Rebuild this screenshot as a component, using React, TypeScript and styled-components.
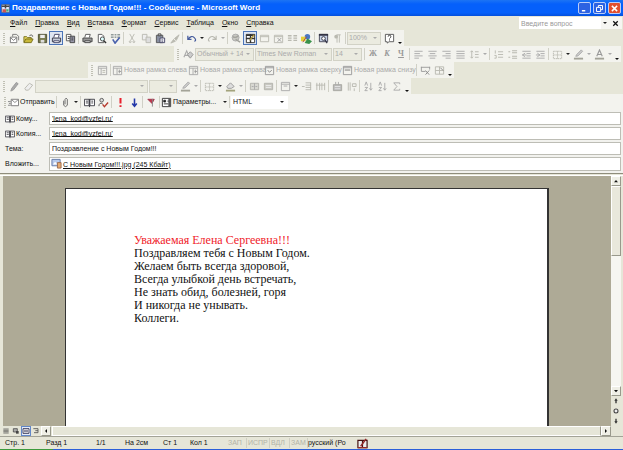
import React from "react";
import styled, { createGlobalStyle, css } from "styled-components";

const Global = createGlobalStyle`
  * { box-sizing: border-box; }
  html, body { margin: 0; padding: 0; }
  body { background: #e6e6d8; font-family: "Liberation Sans", Arial, sans-serif; font-size: 7px; line-height: 10px; color: #111; }
  button, input, select { font: inherit; color: inherit; margin: 0; padding: 0; border: 0; border-radius: 0; background: none; }
`;

const G = "#b9b9b0";
const K = "#3c3c44";

const icons: Record<string, React.ReactNode> = {
  app: <><rect x="1" y="1" width="10" height="10" fill="#dfe8ff" stroke="#666" /><path d="M1 3h10M6 1v5" stroke="#444" strokeWidth="2" /><path d="M2 7h5v4H2z" fill="#c55" /><path d="M7 7h3v3H7z" fill="#4a7" /></>,
  newMail: <><path d="M1.500 4.500h7v6h-7z" fill="#fff" stroke="#777" /><path d="M1.500 5l3.500 3 3.500-3M4 4V1.500h4l2.500 2V8" fill="none" stroke="#777" /></>,
  open: <><path d="M1 10V4h3l1 1h4v2" fill="#e8d860" stroke="#77701c" /><path d="M1 10.500l2-4h8l-2 4z" fill="#c9b93a" stroke="#77701c" /><path d="M7 3q2-2 3.500 0l0 1" fill="none" stroke="#555" /></>,
  save: <><path d="M1.500 1.500h9v9h-9z" fill="#77794c" stroke="#4c4e32" /><path d="M3.500 2h5v3.500h-5z" fill="#eee" /><path d="M4 7.500h4v3H4z" fill="#ddd" /></>,
  printOn: <><path d="M3 5l1-3.500h5L8 5" fill="#fff" stroke="#446" /><path d="M1.500 5.500h9v4h-9z" fill="#c5cbd8" stroke="#334" /><path d="M3 8.500h6v2H3z" fill="#fff" stroke="#446" /></>,
  find: <><path d="M1.500 1.500h5v7h-5z" fill="#fff" stroke="#555" /><path d="M5.500 3.500h5v7h-5z" fill="#99a" stroke="#444" /><path d="M3 4h2M3 6h2M7 5.500h2M7 7.500h2" stroke="#333" /></>,
  print: <><path d="M3 5l1-3.500h5L8 5" fill="#fff" stroke="#555" /><path d="M1 5.500h10v4H1z" fill="#999" stroke="#444" /><path d="M3 8.500h6v2H3z" fill="#ddd" stroke="#444" /></>,
  preview: <><path d="M2.500 1.500h4l2 2v7h-6z" fill="#fff" stroke="#555" /><circle cx="7" cy="6.500" r="2.200" fill="#dff" stroke="#444" /><path d="M8.500 8.500l2.500 2.500" stroke="#333" strokeWidth="1.500" /></>,
  spell: <><path d="M1 4.500h3M5 4.500h2M8 4.500h3M1 2h3M5 2h2M8 2h3" stroke="#566" /><path d="M3 7l2.500 4L10.500 5" fill="none" stroke="#4a62ad" strokeWidth="1.800" /></>,
  cut: <path d="M3 1l4 7M8 1L4 8M2.500 9.500a1 1 0 1 0 2 0 1 1 0 1 0-2 0M6.500 9.500a1 1 0 1 0 2 0 1 1 0 1 0-2 0" fill="none" stroke={G} />,
  copy: <><path d="M1.500 1.500h5v6h-5z" fill="#eee" stroke={G} /><path d="M5.500 4.500h5v6h-5z" fill="#ddd" stroke={G} /></>,
  paste: <><path d="M1.500 2.500h7v8h-7z" fill="#888fa0" stroke="#555" /><path d="M3.500 1h3v2h-3z" fill="#ddd" stroke="#444" /><path d="M5.500 5.500h5v5h-5z" fill="#fff" stroke="#446" /><path d="M7 7.500h2M7 9h2" stroke="#557" /></>,
  brush: <path d="M2 11l3-4 2 2zM6 6l2 2 3-6z" fill={G} stroke={G} />,
  undo: <path d="M2 3v4h4M2.500 6.500Q6 2 9 5t0 4" fill="none" stroke="#445a9c" strokeWidth="1.300" />,
  redo: <path d="M10 3v4H6M9.500 6.500Q6 2 3 5t0 4" fill="none" stroke={G} strokeWidth="1.200" />,
  globe: <><circle cx="5" cy="5" r="3.800" fill="#c8c8c2" stroke="#aaa" /><path d="M2 4q3 2 6-1M5 7l5 3" stroke="#a2a29c" fill="none" strokeWidth="1.500" /></>,
  tables: <><path d="M1.500 1.500h9v9h-9z" fill="#fff" stroke="#333" /><path d="M1 2.500h10M1 6h10M6 1v10" stroke="#333" strokeWidth="1.500" /><path d="M5 8l5-6" stroke="#b59b3b" strokeWidth="1.500" /></>,
  table: <path d="M1.500 2.500h9v7h-9zM1.500 4h9" fill="none" stroke={G} />,
  excel: <><path d="M1.500 2.500h9v8h-9zM1.500 4h9" fill="none" stroke={G} /><path d="M5 5.500l4 4M9 5.500l-4 4" stroke="#999" /></>,
  columns: <path d="M1 3h4M7 3h4M1 5.500h4M7 5.500h4M1 8h4M7 8h4" stroke={G} strokeWidth="1.400" />,
  draw: <><circle cx="7" cy="4" r="3" fill="#4a78c5" /><path d="M0 4h5v5H0z" fill="#e5cf3a" /><path d="M4 11l3-5 5 3-3 3z" fill="#39914b" /><path d="M2 10l4-6" stroke="#a44" /></>,
  map: <><path d="M1.500 1.500h9v8h-9z" fill="#c5d0e6" stroke="#445" /><path d="M1 2h10" stroke="#334" strokeWidth="2" /><circle cx="6" cy="6" r="2" fill="#fff" stroke="#334" /><path d="M7.500 7.500L10 11" stroke="#334" strokeWidth="1.300" /></>,
  pilcrow: <><path d="M5.500 2v8.500M8 2v8.500M9.500 2H5" stroke={G} fill="none" /><circle cx="4.500" cy="4" r="2" fill={G} /></>,
  help: <><path d="M1.500 1.500h9v8h-5l-2 1.500V9.500h-2z" fill="#fff" stroke="#555" /><path d="M4.500 4q0-1.500 1.500-1.500T7.500 4Q7.500 5 6 6M6 7v1.200" fill="none" stroke="#333" /></>,
  styles: <><path d="M1 9l3-7 3 7M2 7h4" fill="none" stroke="#aaa" strokeWidth="1.200" /><path d="M5 6l3-3 3 3-3 4z" fill="#ccc" stroke="#999" /></>,
  left: <path d="M1.500 2.500h9M1.500 5h6M1.500 7.500h9M1.500 10h5" stroke="#aaa" />,
  center: <path d="M1.500 2.500h9M3 5h6M1.500 7.500h9M3 10h6" stroke="#aaa" />,
  right: <path d="M1.500 2.500h9M5 5h5.500M1.500 7.500h9M5 10h5.500" stroke="#aaa" />,
  justify: <path d="M1.500 2.500h9M1.500 5h9M1.500 7.500h9M1.500 10h9" stroke="#aaa" />,
  spacing: <path d="M3 2v8M1.500 3.500L3 2l1.500 1.500M1.500 8.500L3 10l1.500-1.500M6.500 3h4M6.500 6h4M6.500 9h4" fill="none" stroke={G} />,
  numbered: <path d="M2.500 1.500V5M1.500 7h2v3h-2M5.500 3H11M5.500 6H11M5.500 9H11" fill="none" stroke={G} />,
  bullets: <path d="M1.500 3H3.500M1.500 9H3.500M5.500 2H11M5.500 4H11M5.500 8H11M5.500 10H11" stroke={G} strokeWidth="1.100" />,
  outdent: <path d="M1.500 2.500h9M6 5h4.500M6 7.500h4.500M1.500 10h9M4.500 4.500l-3 2 3 2M1.500 6.500H6" fill="none" stroke="#aaa" />,
  indent: <path d="M1.500 2.500h9M6 5h4.500M6 7.500h4.500M1.500 10h9M2.500 4.500l3 2-3 2M1 6.500h4" fill="none" stroke="#aaa" />,
  border: <path d="M1.500 2.500h9v8h-9zM6 2.500v8M1.500 6.500h9" fill="none" stroke={G} strokeDasharray="1.500 .7" />,
  pen: <><path d="M3 8l1-2 5-5 1.500 1.500-5 5z" fill="#ccc" stroke="#aaa" /><path d="M1 10.500h10" stroke="#a3a398" strokeWidth="2" /></>,
  fontColor: <><path d="M3 8l3-7 3 7M4 6h4" fill="none" stroke="#999" strokeWidth="1.200" /><path d="M1 10.500h10" stroke="#a3a398" strokeWidth="2" /></>,
  fill: <><path d="M2 6l4-4 4 4-3 2H3z" fill="#ddd" stroke="#999" /><path d="M1 10.500h10" stroke="#a3a37c" strokeWidth="2" /></>,
  frameTree: <><path d="M1.500 1.500h9v9h-9zM1.500 3.500h9M4.500 3.500v7" fill="none" stroke="#aaa" /><path d="M6 6h3M6 8h3" stroke={G} /></>,
  frameLeft: <><path d="M1.500 1.500h9v9h-9zM1.500 3.500h9M5.500 3.500v7" fill="none" stroke="#aaa" /><path d="M8 5v4M7 7h3" stroke="#999" /></>,
  frameTop: <><path d="M1.500 1.500h9v9h-9zM1.500 3h9" fill="none" stroke="#999" /><path d="M4 5.500l2 2.500 2.500-2.500" fill="none" stroke="#888" /></>,
  frameBottom: <><path d="M1.500 1.500h9v9h-9zM1.500 3h9" fill="none" stroke="#999" /><path d="M3 5.500h6" stroke="#777" /></>,
  frameDel: <><path d="M1 2.500h10M1.500 2v5H6M10.500 2v3" fill="none" stroke="#999" /><path d="M6 6l4 4.500M10 6l-4 4.500" stroke="#888" /></>,
  frameProps: <><path d="M1.500 2h9v8h-9zM6 2v8M1.500 6h9" fill="none" stroke={G} /><path d="M7 3l3 3" stroke="#888" /></>,
  pencil: <path d="M2 11l1-3 5-6.500 2 1.500-5 6.500z" fill="#aaa" stroke="#999" />,
  eraser: <path d="M2 8l5-5.500 3.500 2L6 10H3z" fill="#eee" stroke={G} />,
  merge: <><path d="M1.500 2.500h9v7h-9z" fill="#d8d8d2" stroke="#b2b2ac" /><path d="M6 2.500v7M3 6h2M7 6h2" stroke="#aaa" /></>,
  split: <><path d="M1.500 2.500h9v7h-9z" fill="#c8c8c1" stroke="#b2b2ac" /><path d="M3 5h6M3 7h6" stroke="#eee" /></>,
  alignTop: <path d="M1.500 1.500h9v9h-9zM1.500 3.500h9M4 5.500h4" fill="none" stroke="#aaa" />,
  rows: <path d="M5 2h6M5 4.500h6M5 7h6M5 9.500h6M10.500 2v8M1 6h3" fill="none" stroke={G} />,
  cols: <path d="M2 2v8M5 2v8M7.500 2v8M10.500 2v8M1 4.500h10" fill="none" stroke={G} />,
  auto: <><path d="M1.500 4h9v6.500h-9z" fill="#bbb" stroke="#a5a5a0" /><path d="M4 1v3M7 1v3" stroke="#aaa" /><path d="M3 6h6M3 8.500h6" stroke="#e5e5e5" /></>,
  textDir: <path d="M2.500 1.500v9M4.500 1.500v9M7 3h4v3H7zM9 8v3" fill="none" stroke={G} />,
  sortA: <path d="M2 5l1.500-4L5 5M2 7h3l-3 3.500h3M8.500 2v8M7 8l1.500 2L10 8" fill="none" stroke="#aaa" />,
  sum: <path d="M9.500 3.500V2H3l3.500 4L3 10h6.500V8.500" fill="none" stroke="#aaa" />,
  send: <><path d="M3.500 2.500h8v7h-8z" fill="#fff" stroke="#777" /><path d="M4 3l3.500 3L11 3M0 5h3M1 7h2M0 9h3" fill="none" stroke="#888" /></>,
  clip: <path d="M4 4v5q2 3 4 0V2.500Q6.500 0 5.500 2.500V8" fill="none" stroke="#666" />,
  book: <><path d="M.5 2.500h5v7h-5zM6.500 2.500h5v7h-5z" fill="#fff" stroke={K} /><path d="M6 2v9M2 4.500h2.500M2 6.500h2.500M8 4.500h2M8 6.500h2" stroke={K} /></>,
  names: <><circle cx="4" cy="3.500" r="2" fill="#ddd" stroke="#555" /><path d="M1 10q0-4 4-3" fill="none" stroke="#555" /><path d="M5 8l2 2.500L11 6" fill="none" stroke="#b53a2e" strokeWidth="1.500" /></>,
  high: <path d="M6 1v6M6 9v2" stroke="#e8202c" strokeWidth="2.200" />,
  low: <path d="M6 1.500v8M3.500 7L6 10l2.500-3" fill="none" stroke="#2438a8" strokeWidth="1.700" />,
  flag: <><path d="M2 2.500h7L6.500 7z" fill="#c2344a" stroke="#a2344a" /><path d="M7 2v8.500" stroke="#888" /></>,
  params: <><path d="M1.500 1.500h9v9h-9z" fill="#fff" stroke="#333" /><path d="M3 3.500h2v2H3zM3 7.500h5M7 4.500h2" stroke="#333" /><path d="M8 2h2v8H8z" fill="#555" /></>,
  picture: <><path d="M1 1.500h9v7H1z" fill="#b9cbee" stroke="#6479a6" /><path d="M2 7l2.500-3L7 7z" fill="#fff" /><path d="M7 5h4v6H7z" fill="#e6ab72" stroke="#9b694e" /></>,
  bookRed: <><path d="M1 2.500h5v8H1zM6 2.500h5v8H6z" fill="#eee" stroke="#411" strokeWidth="1.300" /><path d="M1 10.500h10M4 9l6-8" stroke="#962b2b" strokeWidth="1.600" /></>,
  vNormal: <path d="M2 3h8M2 5h8M2 7h8M2 9h8" stroke="#444" />,
  vWeb: <><path d="M2 2.500h6v5H2z" fill="#aaa" stroke="#333" /><path d="M6 6h4v4H6z" fill="#444" /></>,
  vPrint: <><path d="M1.500 2.500h9v7h-9z" fill="#fff" stroke="#335" strokeWidth="1.400" /><path d="M3 5h6M3 7h6" stroke="#335" /></>,
  vOutline: <path d="M2 2.500h7v6H3M5 5.500h4" fill="none" stroke="#555" strokeWidth="1.300" />,
  down: <path d="M3 4.500h6L6 8z" fill="#111" />,
  up: <path d="M3 8h6L6 4.500z" fill="#111" />,
  leftArrow: <path d="M7.500 3v6L4.500 6z" fill="#111" />,
  rightArrow: <path d="M4.500 3v6l3-3z" fill="#111" />,
  pageUp: <path d="M6 2l2.500 3.500h-1.500v4h-2v-4H3.500z" fill="#333" />,
  pageDown: <path d="M6 10l2.500-3.500h-1.500v-4h-2v4H3.500z" fill="#333" />,
  circle: <circle cx="6" cy="6" r="3" fill="#eee" stroke="#444" strokeWidth="1.600" />,
  min: <path d="M2.500 9h4.500" stroke="#fff" strokeWidth="2" />,
  restore: <path d="M4.500 4V2h5.500v5.500H8M2 4.500h5.500V10H2z" fill="none" stroke="#fff" strokeWidth="1.300" />,
  close: <path d="M2.500 2.500l7 7M9.500 2.500l-7 7" stroke="#fff" strokeWidth="1.900" />,
  docClose: <path d="M3 3l6 6M9 3L3 9" stroke="#111" strokeWidth="1.700" />,
};

const Svg = styled.svg<{ $s: number }>`
  display: block; flex: none; width: ${(p) => p.$s}px; height: ${(p) => p.$s}px;
`;
const Icon = ({ n, s = 11 }: { n: string; s?: number }) => (
  <Svg $s={s} viewBox="0 0 12 12" aria-hidden="true">{icons[n]}</Svg>
);

const Window = styled.div`
  min-height: 100vh; display: flex; flex-direction: column; background: #e6e6d8; overflow: hidden;
`;
const TitleBar = styled.header`
  height: 16px; display: flex; align-items: center; gap: 2px; padding: 0 2px 0 1px;
  background: linear-gradient(#1c74f4, #0560fb 25%, #0560fb 80%, #0450dc);
`;
const Title = styled.h1`
  flex: 1; margin: 0; white-space: nowrap; color: #fff; font: bold 8px/14px "Liberation Sans", Arial, sans-serif;
`;
const WinButton = styled.button<{ $red?: boolean }>`
  width: 13px; height: 12px; display: grid; place-items: center; border: 1px solid #b9cdf8; border-radius: 2px;
  background: ${(p) => (p.$red ? "#e1502e" : "#2c62e2")};
`;
const MenuBar = styled.nav`
  height: 14px; display: flex; align-items: center; padding-left: 6px;
`;
const MenuButton = styled.button`
  padding: 0 4px; white-space: nowrap;
  &::first-letter { text-decoration: underline; }
`;
const Ask = styled.input`
  width: 82px; height: 12px; margin-left: auto; padding: 0 2px; background: #fff;
  &::placeholder { color: #999; opacity: 1; }
`;
const AskEnd = styled.div`display: flex; height: 12px; align-items: center; background: #f6f6f2; margin-right: 1px;`;

const Strip = styled.div<{ $indent?: number; $fill?: boolean }>`
  height: 16px; display: flex; align-items: center; white-space: nowrap; color: #aaa;
  background: #f3f3ee; margin-left: ${(p) => p.$indent ?? 0}px;
  align-self: ${(p) => (p.$fill ? "stretch" : "flex-start")};
`;
const Grip = styled.i`
  flex: none; width: 2px; height: 11px; margin: 0 2px 0 3px;
  background: repeating-linear-gradient(#c0c0b4 0 1px, transparent 1px 2px);
`;
const Sep = styled.i`flex: none; width: 1px; height: 12px; margin: 0 1px; background: #d0d0c6;`;
const Tool = styled.button<{ $on?: boolean }>`
  flex: none; min-width: 14px; height: 14px; display: flex; align-items: center; justify-content: center; gap: 1px; white-space: nowrap;
  ${(p) => p.$on && css`border: 1px solid #4b74b8; background: #dfe6f2;`}
`;
const TextTool = styled(Tool)<{ $w: number; $dark?: boolean }>`
  width: ${(p) => p.$w}px; justify-content: flex-start; color: ${(p) => (p.$dark ? "#111" : "#aaa")};
`;
const Letter = styled.span<{ $k?: "b" | "i" | "u" }>`
  font: bold 8px/10px "Liberation Serif", serif; color: #999;
  font-style: ${(p) => (p.$k === "i" ? "italic" : "normal")};
  text-decoration: ${(p) => (p.$k === "u" ? "underline" : "none")};
`;
const CaretButton = styled.button<{ $dark?: boolean }>`
  flex: none; width: 7px; height: 14px; display: grid; place-items: center;
  &::after { content: ""; border: 2px solid transparent; border-top-color: ${(p) => (p.$dark ? "#222" : "#aaa")}; border-bottom: 0; }
`;
const EndButton = styled.button`
  flex: none; width: 8px; height: 15px; display: grid; place-items: end center; padding-bottom: 2px;
  &::after { content: ""; border: 2px solid transparent; border-top-color: #111; border-bottom: 0; }
`;
const SelectWrap = styled.span<{ $w: number; $white?: boolean }>`
  flex: none; width: ${(p) => p.$w}px; height: 13px; margin-right: 1px; display: flex; align-items: center;
  border: 1px solid ${(p) => (p.$white ? "#fff" : "#d2d2c6")};
  background: ${(p) => (p.$white ? "#fff" : "#ebebe0")}; color: ${(p) => (p.$white ? "#111" : "#aaa")};
  &::after { content: ""; margin: 0 3px; border: 2px solid transparent; border-top-color: ${(p) => (p.$white ? "#222" : "#aaa")}; border-bottom: 0; }
`;
const Select = styled.select`
  flex: 1; min-width: 0; height: 11px; padding-left: 1px; appearance: none; opacity: 1;
`;
const Combo = ({ label, value, w, white }: { label: string; value: string; w: number; white?: boolean }) => (
  <SelectWrap $w={w} $white={white}>
    <Select aria-label={label} disabled={!white}><option>{value}</option></Select>
  </SelectWrap>
);

/* "|" is a separator, "v" a pale arrow, "V" a dark one, a leading "*" a pressed button. */
const Tools = ({ list }: { list: string }) => (
  <>
    {list.split(" ").map((t, i) => {
      if (t === "|") return <Sep key={i} />;
      if (t === "v" || t === "V") return <CaretButton key={i} $dark={t === "V"} aria-label="Ещё" />;
      const on = t[0] === "*";
      const n = on ? t.slice(1) : t;
      return <Tool key={i} $on={on} aria-label={n}><Icon n={n} /></Tool>;
    })}
  </>
);

const Envelope = styled.section`
  background: #f2f2ee; padding: 0 2px 2px 1px; border-bottom: 1px solid #8f8d7c;
`;
const Rows = styled.div`padding-top: 1px;`;
const Row = styled.div`height: 15px; display: flex; align-items: center; padding-left: 4px;`;
const RowLabel = styled.label`flex: none; width: 44px; display: flex; align-items: center; gap: 1px;`;
const RowButton = styled.button`flex: none; width: 44px; display: flex; align-items: center; gap: 1px;`;
const Field = styled.input<{ $link?: boolean }>`
  flex: 1; min-width: 0; height: 13px; padding: 0 2px; border: 1px solid #bdbdb5; background: #fff; line-height: 11px;
  ${(p) => p.$link && css`text-decoration: underline 1px; text-underline-offset: 0; text-decoration-skip-ink: none;`}
`;
const AttachBox = styled.div`
  flex: 1; height: 14px; display: flex; align-items: center; gap: 1px; padding: 0 1px; border: 1px solid #bdbdb5; background: #fff;
`;
const FileLink = styled.a`color: inherit; padding-top: 2px; white-space: nowrap;`;

const Work = styled.div`
  flex: 1; display: flex; margin-top: 1px; border-top: 1px solid #fff; padding: 0 2px 0 3px;
`;
const Desk = styled.main`
  flex: 1; display: flex; padding: 12px 62px 0; background: #aeaa96;
`;
const Paper = styled.article`
  flex: 1; padding: 45px 68px; background: #fff; border: 1px solid #333; border-right-width: 2px; border-bottom: 0;
  font: 12px/13px "Liberation Serif", "Times New Roman", serif; color: #111;
`;
const Line = styled.p<{ $red?: boolean }>`margin: 0; color: ${(p) => (p.$red ? "#f0222a" : "inherit")};`;
const VScroll = styled.div`
  width: 10px; display: flex; flex-direction: column; background: #f6f6f1;
`;
const ScrollButton = styled.button`
  width: 10px; height: 10px; display: grid; place-items: center; background: #efefe6;
  border: 1px solid #fff; border-right-color: #99998c; border-bottom-color: #99998c;
`;
const VThumb = styled.div`
  height: 70px; margin-bottom: auto; background: #e9e8dc; border: 1px solid #fff; border-right-color: #99998c; border-bottom-color: #99998c;
`;
const PageButton = styled.button`
  width: 10px; height: 10px; display: grid; place-items: center; background: #e6e6d8;
`;
const BottomBar = styled.div`height: 11px; display: flex; align-items: center; padding: 0 12px 0 1px; border-bottom: 1px solid #a3a397;`;
const ViewButton = styled.button<{ $on?: boolean }>`
  width: 10px; height: 10px; display: grid; place-items: center;
  ${(p) => p.$on && css`border: 1px solid #6287c9; background: #e6ecf8;`}
`;
const HThumb = styled.div`flex: 1; height: 10px; margin-left: 1px; background: #e6e6d8; border: 1px solid #fff; border-right-color: #99998c;`;
const Status = styled.footer`
  height: 12px; display: flex; align-items: center; padding-left: 5px; white-space: nowrap;
`;
const Cell = styled.span<{ $w: number; $off?: boolean }>`
  flex: none; width: ${(p) => p.$w}px; color: ${(p) => (p.$off ? "#b2b2a6" : "#111")};
  ${(p) => p.$off && css`border-right: 1px solid #d0d0c4; padding-left: 1px;`}
`;
const TaskEdge = styled.div`height: 1px; flex: none; background: linear-gradient(90deg, #3c9a3c 53px, #2b5fd9 53px);`;

const menus = ["Файл", "Правка", "Вид", "Вставка", "Формат", "Сервис", "Таблица", "Окно", "Справка"];
const frames: [string, string, number][] = [
  ["frameLeft", "Новая рамка слева", 76],
  ["frameLeft", "Новая рамка справа", 76],
  ["frameTop", "Новая рамка сверху", 78],
  ["frameBottom", "Новая рамка снизу", 73],
];
const verse = [
  "Поздравляем тебя с Новым Годом.",
  "Желаем быть всегда здоровой,",
  "Всегда улыбкой день встречать,",
  "Не знать обид, болезней, горя",
  "И никогда не унывать.",
  "Коллеги.",
];

export default function App() {
  return (
    <Window>
      <Global />
      <TitleBar>
        <Icon n="app" s={9} />
        <Title>Поздравление с Новым Годом!!! - Сообщение - Microsoft Word</Title>
        <WinButton aria-label="Свернуть"><Icon n="min" s={9} /></WinButton>
        <WinButton aria-label="Восстановить"><Icon n="restore" s={9} /></WinButton>
        <WinButton $red aria-label="Закрыть"><Icon n="close" s={9} /></WinButton>
      </TitleBar>
      <MenuBar>
        {menus.map((m) => <MenuButton key={m}>{m}</MenuButton>)}
        <Ask aria-label="Введите вопрос" placeholder="Введите вопрос" />
        <AskEnd>
          <CaretButton $dark aria-label="Вопросы" />
          <Tool aria-label="Закрыть окно"><Icon n="docClose" s={9} /></Tool>
        </AskEnd>
      </MenuBar>
      <Strip>
        <Grip />
        <Tools list="newMail open save *printOn find | print preview spell | cut copy paste brush | undo V redo v | globe *tables table excel columns draw | map pilcrow |" />
        <Combo label="Масштаб" value="100%" w={34} />
        <Tools list="help" />
        <EndButton aria-label="Параметры панели" />
      </Strip>
      <Strip $indent={174}>
        <Grip />
        <Tools list="styles" />
        <Combo label="Стиль" value="Обычный + 14 )" w={59} />
        <Combo label="Шрифт" value="Times New Roman" w={77} />
        <Combo label="Размер" value="14" w={29} />
        <Sep />
        <Tool aria-label="Полужирный"><Letter $k="b">Ж</Letter></Tool>
        <Tool aria-label="Курсив"><Letter $k="i">К</Letter></Tool>
        <Tool aria-label="Подчёркнутый"><Letter $k="u">Ч</Letter></Tool>
        <Sep />
        <Tools list="left center right justify spacing v | numbered bullets outdent indent | border V pen v fontColor v" />
        <EndButton aria-label="Параметры панели" />
      </Strip>
      <Strip $indent={88}>
        <Grip />
        <Tools list="frameTree |" />
        {frames.map(([n, t, w]) => <TextTool key={t} $w={w}><Icon n={n} />{t}</TextTool>)}
        <Tools list="| frameDel frameProps" />
        <EndButton aria-label="Параметры панели" />
      </Strip>
      <Strip>
        <Grip />
        <Tools list="pencil eraser" />
        <Combo label="Тип линии" value="" w={113} />
        <Combo label="Толщина" value="" w={28} />
        <Tools list="pen v | border V fill v | merge split | alignTop V rows cols | auto textDir | sortA sortA sum" />
        <EndButton aria-label="Параметры панели" />
      </Strip>
      <Envelope>
        <Strip $fill>
          <Grip />
          <TextTool $w={47} $dark><Icon n="send" />Отправить</TextTool>
          <Tools list="| clip V | book names | high low | flag |" />
          <TextTool $w={60} $dark><Icon n="params" />Параметры...</TextTool>
          <Tools list="V |" />
          <Combo label="Формат сообщения" value="HTML" w={57} white />
        </Strip>
        <Rows>
          <Row><RowButton><Icon n="book" s={10} />Кому...</RowButton><Field $link aria-label="Кому" defaultValue="'lena_kod@vzfei.ru'" /></Row>
          <Row><RowButton><Icon n="book" s={10} />Копия...</RowButton><Field $link aria-label="Копия" defaultValue="'lena_kod@vzfei.ru'" /></Row>
          <Row><RowLabel htmlFor="subject">Тема:</RowLabel><Field id="subject" defaultValue="Поздравление с Новым Годом!!!" /></Row>
          <Row><RowButton>Вложить...</RowButton><AttachBox><Icon n="picture" /><FileLink href="#file">С Новым Годом!!!.jpg (245 Кбайт)</FileLink></AttachBox></Row>
        </Rows>
      </Envelope>
      <Work>
        <Desk>
          <Paper>
            <Line $red>Уважаемая Елена Сергеевна!!!</Line>
            {verse.map((v) => <Line key={v}>{v}</Line>)}
          </Paper>
        </Desk>
        <VScroll>
          <ScrollButton aria-label="Вверх"><Icon n="up" s={8} /></ScrollButton>
          <VThumb />
          <ScrollButton aria-label="Вниз"><Icon n="down" s={8} /></ScrollButton>
          <PageButton aria-label="Предыдущая страница"><Icon n="pageUp" s={8} /></PageButton>
          <PageButton aria-label="Выбор объекта"><Icon n="circle" s={8} /></PageButton>
          <PageButton aria-label="Следующая страница"><Icon n="pageDown" s={8} /></PageButton>
        </VScroll>
      </Work>
      <BottomBar>
        {["vNormal", "vWeb", "vPrint", "vOutline"].map((n) => (
          <ViewButton key={n} $on={n === "vPrint"} aria-label={n}><Icon n={n} s={8} /></ViewButton>
        ))}
        <ScrollButton aria-label="Влево"><Icon n="leftArrow" s={8} /></ScrollButton>
        <HThumb />
        <ScrollButton aria-label="Вправо"><Icon n="rightArrow" s={8} /></ScrollButton>
      </BottomBar>
      <Status>
        <Cell $w={41}>Стр. 1</Cell>
        <Cell $w={50}>Разд 1</Cell>
        <Cell $w={29}>1/1</Cell>
        <Cell $w={38}>На 2см</Cell>
        <Cell $w={27}>Ст 1</Cell>
        <Cell $w={37}>Кол 1</Cell>
        <Cell $w={20} $off>ЗАП</Cell>
        <Cell $w={23} $off>ИСПР</Cell>
        <Cell $w={20} $off>ВДЛ</Cell>
        <Cell $w={18} $off>ЗАМ</Cell>
        <Cell $w={49}>русский (Ро</Cell>
        <Icon n="bookRed" />
      </Status>
      <TaskEdge />
    </Window>
  );
}
